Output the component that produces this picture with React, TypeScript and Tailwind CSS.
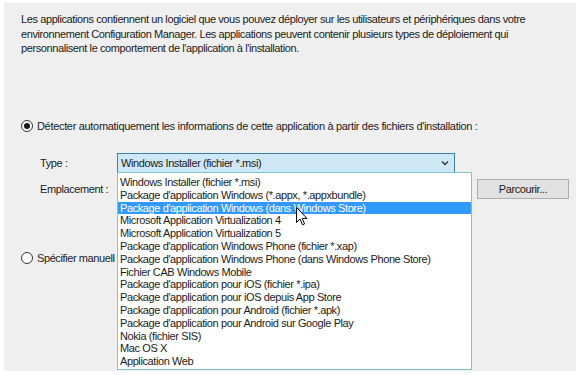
import React from "react";

const options = [
  "Windows Installer (fichier *.msi)",
  "Package d'application Windows (*.appx, *.appxbundle)",
  "Package d'application Windows (dans Windows Store)",
  "Microsoft Application Virtualization 4",
  "Microsoft Application Virtualization 5",
  "Package d'application Windows Phone (fichier *.xap)",
  "Package d'application Windows Phone (dans Windows Phone Store)",
  "Fichier CAB Windows Mobile",
  "Package d'application pour iOS (fichier *.ipa)",
  "Package d'application pour iOS depuis App Store",
  "Package d'application pour Android (fichier *.apk)",
  "Package d'application pour Android sur Google Play",
  "Nokia (fichier SIS)",
  "Mac OS X",
  "Application Web",
];

function Radio({ checked }: { checked?: boolean }) {
  return (
    <span className="flex h-[12px] w-[12px] shrink-0 items-center justify-center rounded-full border border-[#333] bg-white">
      {checked && <span className="h-[6px] w-[6px] rounded-full bg-[#1a1a1a]" />}
    </span>
  );
}

function Cursor() {
  return (
    <svg width="12" height="19" viewBox="0 0 12 19" className="absolute left-[178px] top-[34px]">
      <polygon
        points="0.5,0.5 0.5,15.5 4,12 6.5,17.8 8.6,16.9 6.2,11.4 11,11.4"
        fill="#fff"
        stroke="#000"
        strokeWidth="1"
        strokeLinejoin="round"
      />
    </svg>
  );
}

export default function App() {
  return (
    <div
      className="h-[375px] w-[581px] bg-white pl-[4px] pr-[5px] pt-[3px] pb-[4px] text-[11px] tracking-[-0.4px] text-[#1b1b1b]"
      style={{ fontFamily: '"Liberation Sans", Arial, sans-serif' }}
    >
      <div className="h-full w-full bg-[#f0eff0] pl-[17px] pt-[9px]">
        <p className="whitespace-nowrap leading-[14.5px]">
          Les applications contiennent un logiciel que vous pouvez déployer sur les utilisateurs et périphériques dans votre
          <br />
          environnement Configuration Manager. Les applications peuvent contenir plusieurs types de déploiement qui
          <br />
          personnalisent le comportement de l'application à l'installation.
        </p>

        <div className="mt-[62px] flex items-center gap-[4px]">
          <Radio checked />
          <span className="whitespace-nowrap tracking-[-0.32px]">
            Détecter automatiquement les informations de cette application à partir des fichiers d'installation :
          </span>
        </div>

        <div className="mt-[19px] flex items-center pl-[19px]">
          <span className="w-[77px]">Type :</span>
          <div className="relative">
            <div className="flex h-[20px] w-[338px] items-center justify-between border border-[#3c7fb1] bg-[#cfe8f7] pl-[3px] pr-[5px]">
              <span>Windows Installer (fichier *.msi)</span>
              <svg width="8" height="6" viewBox="0 0 8 6">
                <path d="M1 1.5 L4 4.5 L7 1.5" fill="none" stroke="#333" strokeWidth="1.4" />
              </svg>
            </div>
            <div className="absolute left-0 top-[19px] z-10 w-[355px] border border-[#7cc5cc] bg-white pb-[1px] pt-[3px]">
              {options.map((o, i) => (
                <div
                  key={o}
                  className={
                    i === 2
                      ? "h-[12.8px] whitespace-nowrap bg-[#3399ff] pl-[2px] leading-[12.8px] text-white"
                      : "h-[12.8px] whitespace-nowrap pl-[2px] leading-[12.8px]"
                  }
                >
                  {o}
                </div>
              ))}
              <Cursor />
            </div>
          </div>
        </div>

        <div className="mt-[6px] flex items-center pl-[19px]">
          <span className="w-[437px]">Emplacement :</span>
          <div className="flex h-[20px] w-[92px] items-center justify-center border border-[#adadad] bg-[#e1e1e1]">
            Parcourir...
          </div>
        </div>

        <div className="mt-[51px] flex items-center gap-[4px]">
          <Radio />
          <span className="w-[78px] overflow-hidden whitespace-nowrap">
            Spécifier manuellement les informations de l'application
          </span>
        </div>
      </div>
    </div>
  );
}
